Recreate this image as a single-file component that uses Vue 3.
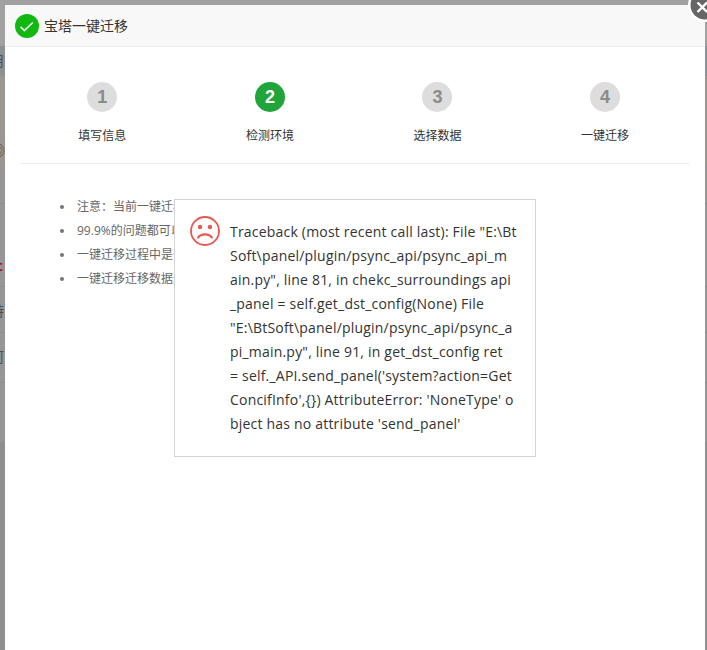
<script setup>
const steps = [
  { n: 1, label: '填写信息', active: false },
  { n: 2, label: '检测环境', active: true },
  { n: 3, label: '选择数据', active: false },
  { n: 4, label: '一键迁移', active: false },
]
const notes = [
  '注意：当前一键迁移仅支持面板数据迁移',
  '99.9%的问题都可以通过检测环境发现',
  '一键迁移过程中是否影响网站运行',
  '一键迁移迁移数据过程需要较长时间',
]
const lines = [
  'Traceback (most recent call last): File "E:\\Bt',
  'Soft\\panel/plugin/psync_api/psync_api_m',
  'ain.py", line 81, in chekc_surroundings api',
  '_panel = self.get_dst_config(None) File',
  '"E:\\BtSoft\\panel/plugin/psync_api/psync_a',
  'pi_main.py", line 91, in get_dst_config ret',
  '= self._API.send_panel(\'system?action=Get',
  'ConcifInfo\',{}) AttributeError: \'NoneType\' o',
  'bject has no attribute \'send_panel\'',
]
</script>

<template>
  <div class="page">
    <div class="backdrop">
      <div class="band b1"></div>
      <div class="band b2"><span class="peek">用</span></div>
      <div class="band b3"></div>
      <div class="band b4"><span class="peek ring">◎</span></div>
      <div class="band b5"></div>
      <div class="band b6"><span class="peek red">c</span></div>
      <div class="band b7"><span class="peek">詩</span></div>
      <div class="band b8"><span class="peek">阿</span></div>
      <div class="band b8b"></div>
      <div class="band b9"></div>
    </div>

    <section class="dialog">
      <header class="head">
        <svg class="ok" viewBox="0 0 24 24" width="24" height="24" aria-hidden="true">
          <circle cx="12" cy="12" r="12" fill="#12b812" />
          <path d="M5.6 12.8l3.8 3.7 8.4-8" fill="none" stroke="#e8f8e8" stroke-width="1.7" />
        </svg>
        <span class="title">宝塔一键迁移</span>
      </header>

      <div class="body">
        <div class="steps-wrap">
          <div class="steps">
            <div v-for="s in steps" :key="s.n" class="step">
              <span class="num" :class="{ on: s.active }">{{ s.n }}</span>
              <span class="label">{{ s.label }}</span>
            </div>
          </div>
        </div>
        <ul class="notes">
          <li v-for="t in notes" :key="t">{{ t }}</li>
        </ul>
      </div>
    </section>

    <svg class="close" viewBox="0 0 34 34" width="34" height="34" aria-hidden="true">
      <circle cx="17" cy="17" r="17" fill="#fff" />
      <circle cx="17" cy="17" r="14.5" fill="#666" />
      <path d="M9.5 14.5l9.5 9.5M19 14.5l-9.5 9.5" stroke="#fff" stroke-width="2.4" />
    </svg>

    <aside class="toast">
      <svg class="sad" viewBox="0 0 30 30" width="30" height="30" aria-hidden="true">
        <circle cx="15" cy="15" r="14" fill="none" stroke="#e9574e" stroke-width="1.8" />
        <circle cx="10" cy="11" r="2.2" fill="#e9574e" />
        <circle cx="20" cy="11" r="2.2" fill="#e9574e" />
        <path d="M7.8 22.2c2.4-5.2 12-5.2 14.4 0" fill="none" stroke="#e9574e" stroke-width="2.2" />
      </svg>
      <div class="msg">
        <div v-for="l in lines" :key="l" class="line">{{ l }}</div>
      </div>
    </aside>
  </div>
</template>

<style>
html, body { margin: 0; overflow: hidden; }
</style>

<style scoped>
.page {
  position: relative;
  box-sizing: border-box;
  width: 707px;
  height: 650px;
  padding: 5px 2px 0 5px;
  overflow: hidden;
  font-family: "Open Sans", "Noto Sans CJK SC", sans-serif;
  background: #969696;
}
.backdrop {
  position: absolute;
  inset: 0;
  display: flex;
  flex-direction: column;
}
.band {
  display: flex;
  justify-content: flex-start;
  align-items: flex-start;
  width: 100%;
  box-sizing: border-box;
  overflow: hidden;
  border-bottom: 1px solid #8c8c8c;
}
.b1 { height: 46px; background: #a1a1a1; border: 0; }
.b2 { height: 30px; background: #8e9194; border: 0; padding-top: 7px; }
.b3 { height: 60px; background: #9c9790; border: 0; }
.b4 { height: 28px; background: #9a9690; border: 0; padding-top: 6px; }
.b5 { height: 40px; background: #979695; }
.b6 { height: 83px; background: #969696; padding-top: 54px; }
.b7 { height: 46px; background: #969696; padding-top: 16px; }
.b8 { height: 50px; background: #969696; padding-top: 16px; }
.b8b { height: 59px; background: #969696; border: 0; }
.b9 { flex: 1; background: #8f8f8f; border: 0; }
.peek {
  margin-left: -10px;
  width: 14px;
  font-size: 14px;
  line-height: 16px;
  color: #4d4d55;
  flex: none;
}
.ring { color: #5d4a2a; font-size: 15px; }
.red { margin-left: -4px; width: 9px; color: #a80a0a; font-weight: 600; }

.dialog {
  position: relative;
  display: flex;
  flex-direction: column;
  width: 700px;
  height: 645px;
  background: #fff;
}
.head {
  box-sizing: border-box;
  height: 42px;
  padding-left: 10px;
  display: flex;
  align-items: center;
  gap: 5px;
  background: #f8f8f8;
  border-bottom: 1px solid #eee;
}
.ok { flex: none; }
.title {
  font-size: 14px;
  color: #333;
  line-height: 20px;
}
.body {
  padding: 35px 15px 0;
  display: flex;
  flex-direction: column;
}
.steps-wrap {
  height: 82px;
  box-sizing: border-box;
  border-bottom: 1px solid #eee;
}
.steps {
  display: grid;
  grid-template-columns: repeat(4, 167.6px);
  margin-left: -1.5px;
}
.step {
  display: flex;
  flex-direction: column;
  align-items: center;
}
.num {
  width: 30px;
  height: 30px;
  border-radius: 50%;
  background: #ddd;
  color: #8a8a8a;
  font-family: "Liberation Sans", sans-serif;
  font-size: 18px;
  font-weight: 700;
  line-height: 30px;
  text-align: center;
}
.num.on {
  background: #20a53a;
  color: #fff;
}
.label {
  margin-top: 15px;
  font-size: 12px;
  line-height: 17px;
  color: #333;
}
.notes {
  list-style: none;
  margin: 31px 0 0;
  padding: 0 0 0 40px;
}
.notes li {
  display: flex;
  align-items: center;
  font-size: 12px;
  line-height: 24px;
  color: #666;
}
.notes li::before {
  content: "";
  flex: none;
  width: 4px;
  height: 4px;
  margin-right: 13px;
  border-radius: 50%;
  background: #777;
}
.close {
  position: absolute;
  left: 688px;
  top: -12px;
}
.toast {
  position: absolute;
  left: 174px;
  top: 199px;
  box-sizing: border-box;
  width: 362px;
  height: 258px;
  padding: 16px 15px 0;
  display: flex;
  gap: 10px;
  background: #fff;
  border: 1px solid #d3d4d3;
}
.sad { flex: none; }
.msg {
  padding-top: 4px;
  font-size: 14px;
  line-height: 24px;
  letter-spacing: 0.2px;
  color: #333;
  white-space: nowrap;
}
</style>
